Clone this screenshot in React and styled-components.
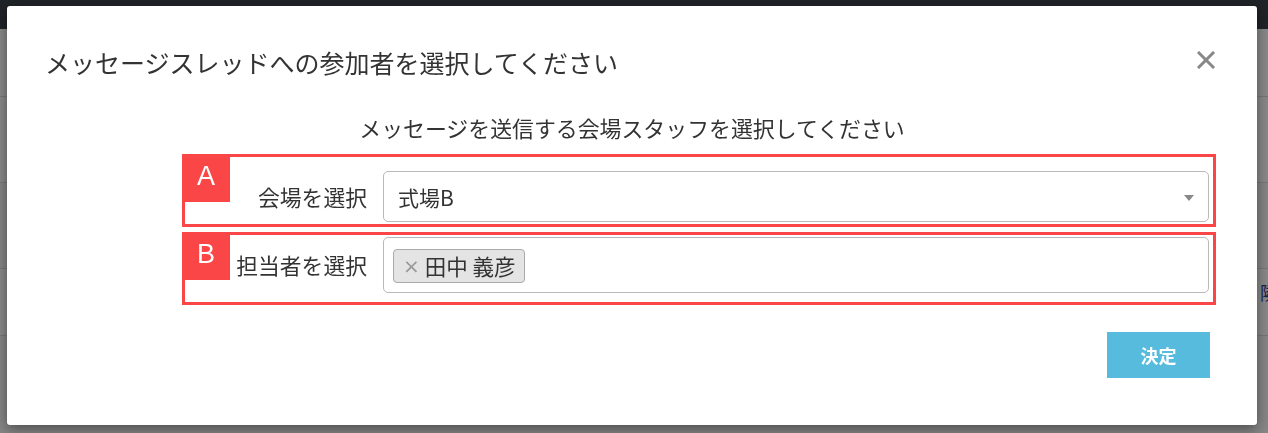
import React from 'react';
import styled, { createGlobalStyle } from 'styled-components';

const GlobalStyle = createGlobalStyle`
  html, body {
    margin: 0;
    padding: 0;
    width: 1268px;
    height: 433px;
    overflow: hidden;
    background: #fff;
    font-family: "Noto Sans CJK JP", "Noto Sans", sans-serif;
  }
`;

// 배경 페이지 (모달 뒤)
const Page = styled.div`
  width: 1268px;
  height: 433px;
  background: #f4f4f4;
`;

const TopBar = styled.div`
  height: 29px;
  background: #394148;
`;

const BgRow = styled.div`
  height: ${props => props.h}px;
  border-bottom: 1px solid #d8d8d8;
  background: ${props => props.bg || '#fafafa'};
  display: flex;
  align-items: flex-start;
  justify-content: flex-end;
  font-size: 18px;
  color: #2a3d8f;
  overflow: hidden;
`;

const BgText = styled.span`
  margin: 10px -10px 0 0;
`;

const Overlay = styled.div`
  position: fixed;
  inset: 0;
  background: rgba(0, 0, 0, 0.45);
  padding: 6px 0 0 7px;
`;

const Modal = styled.div`
  width: 1250px;
  height: 419px;
  box-sizing: border-box;
  background: #fff;
  border-radius: 3px;
  box-shadow: 0 4px 14px rgba(0, 0, 0, 0.45);
  display: flex;
  flex-direction: column;
`;

const Header = styled.div`
  display: flex;
  align-items: center;
  justify-content: space-between;
  padding: 38px 41px 0 38px;
  height: 36px;
`;

const Title = styled.h4`
  margin: 0;
  font-size: 25px;
  font-weight: 400;
  line-height: 36px;
  color: #333;
`;

const CloseButton = styled.button`
  border: none;
  background: transparent;
  padding: 0;
  width: 20px;
  height: 20px;
  display: flex;
  align-items: center;
  justify-content: center;
  cursor: pointer;
  margin-top: -4px;
`;

const Subtitle = styled.p`
  margin: 34px 0 0;
  text-align: center;
  font-size: 21.9px;
  line-height: 28px;
  color: #333;
`;

const FormArea = styled.div`
  margin: 12px 0 0 175px;
  width: 1034px;
  display: flex;
  flex-direction: column;
  gap: 5px;
`;

// 주석용 빨간 박스
const AnnotBox = styled.div`
  position: relative;
  height: 73px;
  box-sizing: border-box;
  border: 3px solid #fa4646;
  padding: ${props => props.pt}px 4px 0 0;
  display: flex;
  align-items: ${props => props.align || 'center'};
`;

const Row = styled.div`
  display: flex;
  align-items: center;
  gap: 16px;
  width: 100%;
  height: ${props => props.h}px;
`;

const Badge = styled.div`
  position: absolute;
  left: -3px;
  top: -3px;
  width: 48px;
  height: 48px;
  background: #fa4646;
  color: #fff;
  font-family: "Liberation Sans", Arial, sans-serif;
  font-size: 27px;
  line-height: 44px;
  text-align: center;
`;

const Label = styled.label`
  width: 182px;
  flex-shrink: 0;
  text-align: right;
  font-size: 21.8px;
  color: #333;
  margin-top: ${props => props.mt || 0}px;
`;

const SelectBox = styled.div`
  flex: 1;
  height: 100%;
  box-sizing: border-box;
  border: 1px solid #b9b9b9;
  border-radius: 5px;
  background: #fff;
  display: flex;
  align-items: center;
  padding: 0 14px 0 ${props => props.pl}px;
`;

const SelectValue = styled.span`
  font-size: 21px;
  color: #333;
  flex: 1;
`;

const Caret = styled.span`
  width: 0;
  height: 0;
  border-left: 5px solid transparent;
  border-right: 5px solid transparent;
  border-top: 6px solid #888;
  margin-top: 2px;
`;

const Tag = styled.span`
  display: inline-flex;
  align-items: center;
  height: 34px;
  box-sizing: border-box;
  border: 1px solid #aaa;
  border-radius: 4px;
  background: #e4e4e4;
  padding: 0 8px 0 9px;
  font-size: 21.5px;
  color: #333;
  margin-top: 1px;
`;

const TagRemove = styled.span`
  color: #999;
  font-size: 20px;
  margin-right: 5px;
  font-family: "DejaVu Sans", sans-serif;
`;

const Footer = styled.div`
  display: flex;
  justify-content: flex-end;
  padding: 27px 47px 0 0;
`;

const SubmitButton = styled.button`
  width: 103px;
  height: 46px;
  border: none;
  background: #56bbdc;
  color: #fff;
  font-family: "Noto Sans CJK JP", sans-serif;
  font-size: 18px;
  font-weight: 700;
  cursor: pointer;
`;

const App = () => {
  return (
    <>
      <GlobalStyle />
      <Page>
        <TopBar />
        <BgRow h={67} />
        <BgRow h={85} />
        <BgRow h={85} bg="#f2f2f2" />
        <BgRow h={66}><BgText>隣</BgText></BgRow>
      </Page>
      <Overlay>
        <Modal>
          <Header>
            <Title>メッセージスレッドへの参加者を選択してください</Title>
            <CloseButton aria-label="close">
              <svg width="18" height="18" viewBox="0 0 18 18">
                <path d="M2 2 L16 16 M16 2 L2 16" stroke="#888" strokeWidth="3" strokeLinecap="square" />
              </svg>
            </CloseButton>
          </Header>
          <Subtitle>メッセージを送信する会場スタッフを選択してください</Subtitle>
          <FormArea>
            <AnnotBox pt={12}>
              <Badge>A</Badge>
              <Row h={51}>
                <Label>会場を選択</Label>
                <SelectBox pl={14}>
                  <SelectValue>式場B</SelectValue>
                  <Caret />
                </SelectBox>
              </Row>
            </AnnotBox>
            <AnnotBox pt={2} align="flex-start">
              <Badge>B</Badge>
              <Row h={56}>
                <Label mt={-2}>担当者を選択</Label>
                <SelectBox pl={9}>
                  <Tag>
                    <TagRemove>×</TagRemove>田中 義彦
                  </Tag>
                </SelectBox>
              </Row>
            </AnnotBox>
          </FormArea>
          <Footer>
            <SubmitButton>決定</SubmitButton>
          </Footer>
        </Modal>
      </Overlay>
    </>
  );
};

export default App;
